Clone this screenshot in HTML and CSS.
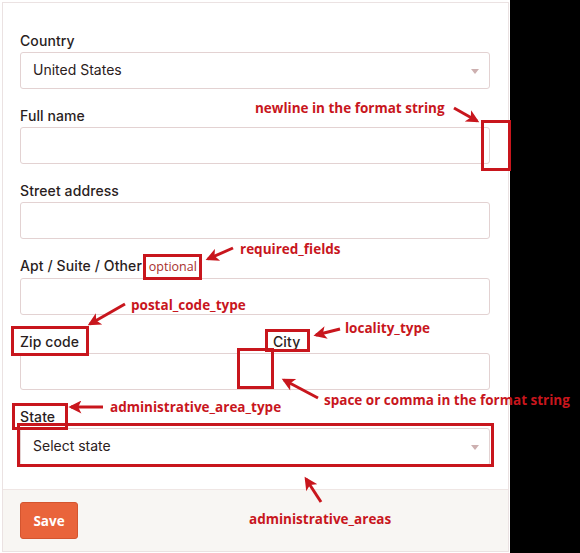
FILE: index.html
```html
<!DOCTYPE html>
<html>
<head>
<meta charset="utf-8">
<link rel="stylesheet" href="styles.css">
</head>
<body>
<div class="screen">
  <div class="card">
    <div class="form">
      <div class="field">
        <div class="label">Country</div>
        <div class="control select">United States<span class="caret"></span></div>
      </div>
      <div class="field">
        <div class="label">Full name</div>
        <div class="control"></div>
      </div>
      <div class="field">
        <div class="label">Street address</div>
        <div class="control"></div>
      </div>
      <div class="field">
        <div class="label">Apt / Suite / Other <span class="optional">optional</span></div>
        <div class="control"></div>
      </div>
      <div class="field">
        <div class="label-row">
          <div class="label">Zip code</div>
          <div class="label">City</div>
        </div>
        <div class="control"></div>
      </div>
      <div class="field">
        <div class="label">State</div>
        <div class="control select tall">Select state<span class="caret"></span></div>
      </div>
    </div>
    <div class="footer">
      <button class="save">Save</button>
    </div>
  </div>
  <div class="dark"></div>

  <div class="note n-newline">newline in the format string</div>
  <div class="note n-required">required_fields</div>
  <div class="note n-postal">postal_code_type</div>
  <div class="note n-locality">locality_type</div>
  <div class="note n-space">space or comma in the format string</div>
  <div class="note n-admintype">administrative_area_type</div>
  <div class="note n-adminareas">administrative_areas</div>

  <div class="box b-newline"></div>
  <div class="box b-optional"></div>
  <div class="box b-zip"></div>
  <div class="box b-city"></div>
  <div class="box b-space"></div>
  <div class="box b-state"></div>
  <div class="box b-select"></div>

  <svg class="arrows" width="580" height="553" viewBox="0 0 580 553">
    <defs>
      <marker id="head" viewBox="0 0 10 10" refX="8" refY="5" markerUnits="userSpaceOnUse" markerWidth="15" markerHeight="13" orient="auto">
        <path d="M0,0 L10,5 L0,10 L2.5,5 z" fill="#c8161d"/>
      </marker>
    </defs>
    <g stroke="#c8161d" stroke-width="3" fill="none" marker-end="url(#head)">
      <line x1="454" y1="108" x2="477" y2="121"/>
      <line x1="233" y1="248" x2="208" y2="259"/>
      <line x1="125" y1="304" x2="90" y2="324"/>
      <line x1="340" y1="329" x2="316" y2="335"/>
      <line x1="318" y1="398" x2="284" y2="380"/>
      <line x1="103" y1="407" x2="71" y2="407"/>
      <line x1="321" y1="502" x2="306" y2="479"/>
    </g>
  </svg>
</div>
</body>
</html>
```
FILE: styles.css
```css
* { box-sizing: border-box; }

html, body {
  margin: 0;
  padding: 0;
  background: #ffffff;
}

.screen {
  position: relative;
  width: 580px;
  height: 553px;
  display: flex;
  padding: 2px 0 1px 2px;
  gap: 1px;
  overflow: hidden;
}

.card {
  width: 507px;
  border: 1px solid #ebe2e2;
  display: flex;
  flex-direction: column;
  background: #fff;
}

.dark {
  flex: 1;
  background: #000;
  margin: -2px 0 -1px 0;
}

.form {
  flex: 1;
  padding: 28px 18px 0 17px;
  display: flex;
  flex-direction: column;
  gap: 17px;
}

.field {
  display: flex;
  flex-direction: column;
  gap: 1px;
}

.label {
  font-family: Inter, "Liberation Sans", sans-serif;
  font-size: 14px;
  font-weight: 500;
  line-height: 20px;
  color: #2a1e1e;
  letter-spacing: 0.1px;
}

.label-row {
  display: grid;
  grid-template-columns: 253px 1fr;
}

.optional {
  font-family: "Open Sans", "Liberation Sans", sans-serif;
  font-size: 12.5px;
  font-weight: 400;
  color: #a8302e;
  margin-left: 3px;
  letter-spacing: 0;
}

.control {
  position: relative;
  height: 37px;
  border: 1px solid #e3d2d2;
  border-radius: 3px;
  background: #fff;
  padding: 0 12px 2px;
  font-family: Inter, "Liberation Sans", sans-serif;
  font-size: 14px;
  color: #2b2020;
  display: flex;
  align-items: center;
}

.control.tall { height: 38px; padding-bottom: 4px; }

.caret {
  position: absolute;
  right: 10px;
  top: 50%;
  margin-top: -2px;
  width: 0;
  height: 0;
  border-left: 4px solid transparent;
  border-right: 4px solid transparent;
  border-top: 5px solid #cdb0b0;
}

.footer {
  border-top: 1px solid #efe6e4;
  background: #f8f6f3;
  padding: 12px 17px 12px;
}

.save {
  width: 58px;
  height: 37px;
  background: #e9643b;
  border: 1px solid #d4552f;
  border-radius: 3px;
  color: #fff;
  font-family: "Open Sans", "Liberation Sans", sans-serif;
  font-size: 13.5px;
  font-weight: 700;
  padding: 0;
}

.note {
  position: absolute;
  font-family: "Open Sans", "Liberation Sans", sans-serif;
  font-weight: 700;
  font-size: 13.5px;
  line-height: 16px;
  color: #c8161d;
  white-space: nowrap;
}

.n-newline { left: 255px; top: 100px; }
.n-required { left: 240px; top: 241px; }
.n-postal { left: 131px; top: 297px; }
.n-locality { left: 345px; top: 320px; }
.n-space { left: 324px; top: 392px; }
.n-admintype { left: 110px; top: 399px; }
.n-adminareas { left: 249px; top: 511px; }

.box {
  position: absolute;
  border: 3px solid #c8161d;
}

.b-newline { left: 481px; top: 120px; width: 30px; height: 51px; }
.b-optional { left: 143px; top: 254px; width: 59px; height: 26px; }
.b-zip { left: 11px; top: 326px; width: 78px; height: 30px; }
.b-city { left: 265px; top: 329px; width: 45px; height: 23px; }
.b-space { left: 237px; top: 348px; width: 37px; height: 41px; }
.b-state { left: 12px; top: 403px; width: 56px; height: 27px; }
.b-select { left: 17px; top: 423px; width: 477px; height: 44px; }

.arrows {
  position: absolute;
  left: 0;
  top: 0;
}
```
